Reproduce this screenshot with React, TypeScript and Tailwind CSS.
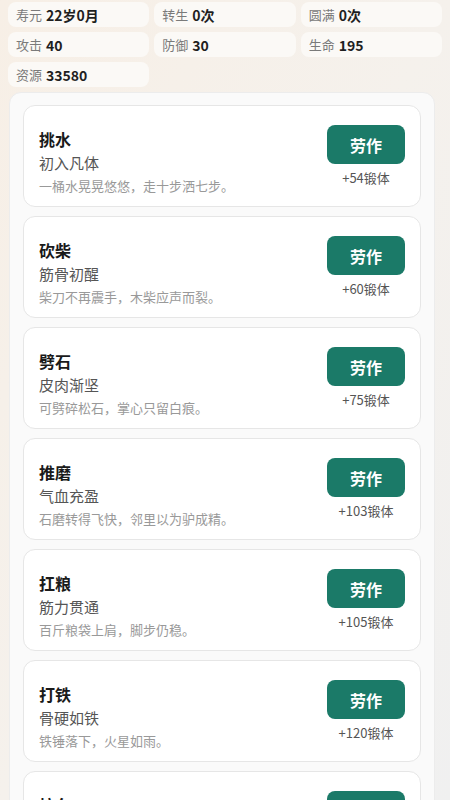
import React from "react";

interface Stat {
  label: string;
  value: string;
}

interface Labor {
  name: string;
  stage: string;
  desc: string;
  reward: number;
}

const stats: Stat[] = [
  { label: "寿元", value: "22岁0月" },
  { label: "转生", value: "0次" },
  { label: "圆满", value: "0次" },
  { label: "攻击", value: "40" },
  { label: "防御", value: "30" },
  { label: "生命", value: "195" },
  { label: "资源", value: "33580" },
];

const labors: Labor[] = [
  { name: "挑水", stage: "初入凡体", desc: "一桶水晃晃悠悠，走十步洒七步。", reward: 54 },
  { name: "砍柴", stage: "筋骨初醒", desc: "柴刀不再震手，木柴应声而裂。", reward: 60 },
  { name: "劈石", stage: "皮肉渐坚", desc: "可劈碎松石，掌心只留白痕。", reward: 75 },
  { name: "推磨", stage: "气血充盈", desc: "石磨转得飞快，邻里以为驴成精。", reward: 103 },
  { name: "扛粮", stage: "筋力贯通", desc: "百斤粮袋上肩，脚步仍稳。", reward: 105 },
  { name: "打铁", stage: "骨硬如铁", desc: "铁锤落下，火星如雨。", reward: 120 },
  { name: "拉车", stage: "力拔千钧", desc: "满载货车，一人拉着走。", reward: 138 },
];

const StatCell = ({ label, value }: Stat) => (
  <div className="h-[25px] flex items-center px-2 rounded-lg bg-[#fbf9f6] text-[13px] leading-none">
    <span className="text-[#7a7a7a]">{label}</span>
    <span className="ml-1 text-[14px] font-bold text-[#1f1f1f]">{value}</span>
  </div>
);

const LaborCard = ({ name, stage, desc, reward }: Labor) => (
  <div className="h-[102px] shrink-0 flex justify-between px-[15px] rounded-xl border border-[#e6e6e6] bg-white">
    <div className="pt-[22px] flex flex-col">
      <div className="h-[23px] leading-[23px] text-[16px] font-bold text-[#1a1a1a]">{name}</div>
      <div className="h-[23px] leading-[23px] text-[15px] text-[#555]">{stage}</div>
      <div className="h-[23px] leading-[23px] text-[13px] text-[#999]">{desc}</div>
    </div>
    <div className="pt-[19px] flex flex-col items-center">
      <button className="w-[78px] h-[39px] rounded-lg bg-[#1b7a68] text-white text-[16px] font-semibold">
        劳作
      </button>
      <div className="mt-[5px] text-[13px] leading-[18px] text-[#555]">+{reward}锻体</div>
    </div>
  </div>
);

export default function App() {
  return (
    <div
      className="w-[450px] h-[800px] overflow-hidden bg-gradient-to-br from-[#f7efe6] via-[#f5f1ec] to-[#f0f0f0] pt-[2px]"
      style={{ fontFamily: '"Noto Sans CJK SC", "Noto Sans", sans-serif' }}
    >
      {/* Stats */}
      <div className="grid grid-cols-3 gap-[5px] px-2">
        {stats.map((s) => (
          <StatCell key={s.label} {...s} />
        ))}
      </div>

      {/* Labor list */}
      <div className="mt-[5px] ml-[9px] w-[426px] h-[720px] flex flex-col gap-[9px] px-[13px] pt-3 rounded-xl border border-[#ececec] bg-[#fafafa] overflow-hidden">
        {labors.map((l) => (
          <LaborCard key={l.name} {...l} />
        ))}
      </div>
    </div>
  );
}
